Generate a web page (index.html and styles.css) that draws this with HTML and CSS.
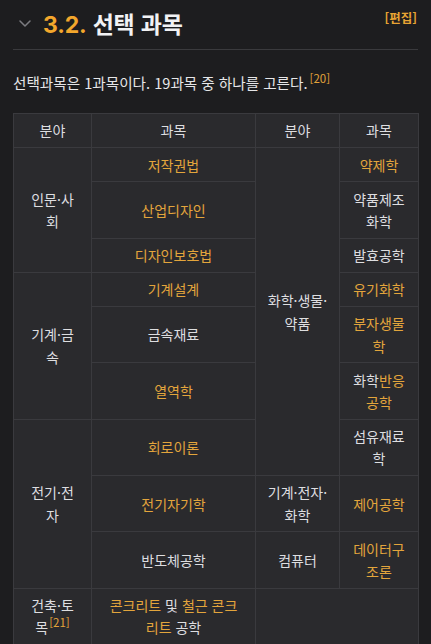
FILE: index.html
```html
<!DOCTYPE html>
<html lang="ko">
<head>
<meta charset="utf-8">
<title>3.2. 선택 과목</title>
<link rel="stylesheet" href="styles.css">
</head>
<body>
<div class="page">
  <div class="heading">
    <svg class="chevron" width="12" height="7" viewBox="0 0 12 7"><path d="M1 1 L6 6 L11 1" fill="none" stroke="#7c7c80" stroke-width="1.5" stroke-linecap="round" stroke-linejoin="round"/></svg>
    <h2 class="title"><span class="num">3.2.</span> 선택 과목</h2>
    <a class="edit">[편집]</a>
  </div>
  <p class="intro">선택과목은 1과목이다. 19과목 중 하나를 고른다.<sup class="fn">[20]</sup></p>
  <table class="subjects">
    <colgroup>
      <col class="c1"><col class="c2"><col class="c3"><col class="c4">
    </colgroup>
    <tr><td class="field f1">분야</td><td class="subj">과목</td><td class="field f3">분야</td><td>과목</td></tr>
    <tr><td class="field f1" rowspan="3">인문·사회</td><td class="subj"><a>저작권법</a></td><td class="field f3" rowspan="7">화학·생물·약품</td><td><a>약제학</a></td></tr>
    <tr><td class="subj"><a>산업디자인</a></td><td>약품제조화학</td></tr>
    <tr><td class="subj"><a>디자인보호법</a></td><td>발효공학</td></tr>
    <tr><td class="field f1" rowspan="3">기계·금속</td><td class="subj"><a>기계설계</a></td><td><a>유기화학</a></td></tr>
    <tr><td class="subj">금속재료</td><td><a>분자생물학</a></td></tr>
    <tr><td class="subj"><a>열역학</a></td><td>화학<a>반응공학</a></td></tr>
    <tr><td class="field f1" rowspan="3">전기·전자</td><td class="subj"><a>회로이론</a></td><td>섬유재료학</td></tr>
    <tr><td class="subj"><a>전기자기학</a></td><td class="field f3">기계·전자·화학</td><td><a>제어공학</a></td></tr>
    <tr><td class="subj">반도체공학</td><td class="field f3">컴퓨터</td><td><a>데이터구조론</a></td></tr>
    <tr><td class="field f1">건축·토목<sup class="fn">[21]</sup></td><td class="subj"><a>콘크리트</a> 및 <a>철근 콘크리트</a> 공학</td><td class="empty" colspan="2"></td></tr>
  </table>
</div>
</body>
</html>
```
FILE: styles.css
```css
html, body {
  margin: 0;
  padding: 0;
  background: #1d1d1f;
}
body {
  font-family: "Noto Sans CJK KR", sans-serif;
  color: #e4e4e6;
}
.page {
  padding: 0 13px;
}
.heading {
  display: flex;
  align-items: center;
  padding: 10px 1px 13px 0;
  border-bottom: 1px solid #3a3a3d;
}
.chevron {
  margin-left: 6px;
  margin-right: 12px;
  flex: none;
}
.title {
  margin: 0;
  height: 26px;
  font-size: 23px;
  line-height: 26px;
  font-weight: 700;
  color: #f2f2f4;
  letter-spacing: -0.2px;
}
.num {
  font-family: "Inter", "Noto Sans CJK KR", sans-serif;
  color: #f3a72c;
}
.edit {
  margin-left: auto;
  align-self: flex-start;
  margin-top: 2px;
  font-size: 12.5px;
  line-height: 12px;
  font-weight: 700;
  color: #e8a433;
}
.intro {
  margin: 22px 0 19px;
  font-size: 14.6px;
  line-height: 22px;
  color: #e6e6e8;
}
.fn {
  font-size: 11.5px;
  line-height: 0;
  color: #e3a43a;
  margin-left: 2px;
  vertical-align: 6px;
}
.subjects {
  width: 405px;
  table-layout: fixed;
  border-collapse: collapse;
  font-size: 14px;
  line-height: 22.25px;
}
.c1 { width: 78px; }
.c2 { width: 164px; }
.c3 { width: 84px; }
.c4 { width: 79px; }
.subjects td {
  background: #2a2a2d;
  border: 1px solid #3a3a3e;
  padding: 5.45px 10px;
  text-align: center;
  vertical-align: middle;
  color: #dedee0;
}
.subjects td.f1 {
  padding-left: 12px;
  padding-right: 12px;
}
.subjects td.f3 {
  padding-left: 9px;
  padding-right: 9px;
}
.subjects td.subj {
  padding-left: 14px;
  padding-right: 14px;
}
.subjects a {
  color: #e3a53c;
}
.subjects .fn {
  font-size: 11.5px;
  margin-left: 1px;
}
```
